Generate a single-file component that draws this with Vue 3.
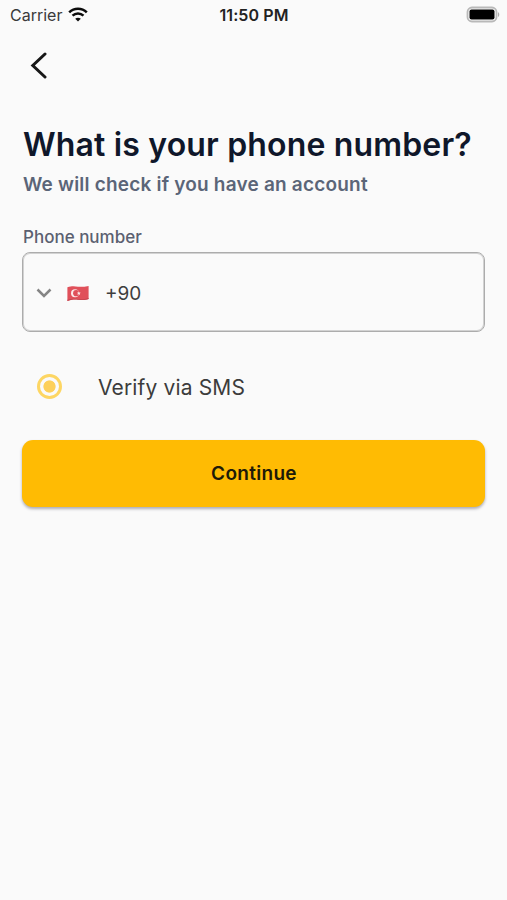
<script setup>
import { ref } from 'vue'

const dialCode = ref('+90')
const method = ref('sms')
</script>

<template>
  <main class="screen">
    <header class="status">
      <div class="carrier">
        <span>Carrier</span>
        <svg class="wifi" viewBox="0 0 20 15" width="20" height="15">
          <path d="M1.200 5.400C6.200.500 13.800.500 18.800 5.400" />
          <path d="M4.500 8.700C7.600 5.800 12.400 5.800 15.500 8.700" />
          <path class="dot" d="M10 14.500L7.200 11.700C8.800 10.300 11.200 10.300 12.800 11.700Z" />
        </svg>
      </div>
      <span class="time">11:50 PM</span>
      <svg class="battery" viewBox="0 0 34 18" width="34" height="18">
        <rect x="1.500" y="1.500" width="29" height="14" rx="4.500" fill="none" stroke="#b9b9b9" stroke-width="1.800" />
        <rect x="3.500" y="3.500" width="25" height="10" rx="2" fill="#000" />
        <path d="M32 6.300c1.700.6 1.700 4 0 4.600z" fill="#adadad" />
      </svg>
    </header>

    <nav class="nav">
      <button class="back" aria-label="Back">
        <svg viewBox="0 0 18 28" width="18" height="28">
          <path d="M15 3L2.800 14.500L15 26" />
        </svg>
      </button>
    </nav>

    <section class="content">
      <h1>What is your phone number?</h1>
      <p class="sub">We will check if you have an account</p>

      <label class="label">Phone number</label>
      <div class="field">
        <svg class="chevron" viewBox="0 0 16 10" width="16" height="10">
          <path d="M1.500 1.500L8 8L14.500 1.500" />
        </svg>
        <svg class="flag" viewBox="0 0 22 17" width="22" height="17">
          <path d="M.4 2.300C5 .8 8 1.400 11 1.700S17.500 1.800 21.600.9V14C17.500 15.400 14 15 11 14.700S5 14.500 .4 15.900Z" fill="#e0505a" />
          <path d="M.4 14.800C5 13.400 8 13.700 11 14S17.500 14.500 21.600 13V14C17.500 15.400 14 15 11 14.700S5 14.500 .4 15.900Z" fill="#c4434e" />
          <circle cx="8" cy="8.200" r="4" fill="#fbe9ea" />
          <circle cx="9.200" cy="8.200" r="3.100" fill="#e0505a" />
          <path d="M11.800 6.300l.6 1.300 1.400.1-1 .9.300 1.400-1.300-.7-1.200.7.300-1.400-1-.9 1.400-.1z" fill="#fbe9ea" />
        </svg>
        <span class="code">{{ dialCode }}</span>
      </div>

      <div class="option" role="radio" :aria-checked="method === 'sms'">
        <span class="radio"></span>
        <span class="option-text">Verify via SMS</span>
      </div>

      <button class="continue">Continue</button>
    </section>
  </main>
</template>

<style>
body {
  background: #fafafa;
}
</style>

<style scoped>
.screen {
  box-sizing: border-box;
  width: 507px;
  height: 900px;
  background: #fafafa;
  font-family: Inter, "Liberation Sans", sans-serif;
  overflow: hidden;
}
.status {
  display: grid;
  grid-template-columns: 1fr auto 1fr;
  align-items: center;
  height: 29px;
  padding: 0 9px 0 10px;
}
.carrier {
  display: flex;
  align-items: center;
  gap: 6px;
  font-size: 16px;
  color: #3a3a3a;
}
.wifi {
  fill: none;
  stroke: #0c0c0c;
  stroke-width: 2.500;
}
.wifi .dot {
  fill: #0c0c0c;
  stroke: none;
}
.time {
  font-size: 16px;
  font-weight: 600;
  letter-spacing: 0.1px;
  color: #222;
}
.battery {
  justify-self: end;
  margin-right: -2px;
}
button {
  border: 0;
  padding: 0;
  background: none;
  font: inherit;
}
.nav {
  display: flex;
  align-items: center;
  height: 72px;
  padding-left: 30px;
}
.back {
  display: flex;
}
.back path {
  fill: none;
  stroke: #171717;
  stroke-width: 3;
  stroke-linecap: round;
}
.content {
  display: flex;
  flex-direction: column;
  padding: 23px 22px 0 23px;
}
h1 {
  margin: 0;
  font-size: 32px;
  line-height: 42px;
  font-weight: 600;
  letter-spacing: 0.160px;
  color: #0f172a;
  white-space: nowrap;
}
.sub {
  margin: 6px 0 0;
  font-size: 19px;
  line-height: 26px;
  font-weight: 600;
  letter-spacing: 0.2px;
  color: #5b6578;
}
.label {
  margin-top: 28px;
  font-size: 17px;
  line-height: 22px;
  font-weight: 500;
  color: #5b6070;
}
.field {
  display: flex;
  align-items: center;
  box-sizing: border-box;
  height: 80px;
  margin-top: 4px;
  margin-left: -1px;
  padding: 2px 0 0 13px;
  border: 1px solid #acacac;
  border-radius: 8px;
  box-shadow: inset 0 0 0 1px #d2d2d2;
}
.chevron path {
  fill: none;
  stroke: #858585;
  stroke-width: 2.500;
}
.flag {
  margin-left: 15px;
}
.code {
  margin-left: 16px;
  font-size: 19px;
  color: #3e3e3e;
}
.option {
  display: flex;
  align-items: center;
  height: 28px;
  margin-top: 40px;
  padding-left: 14px;
}
.radio {
  box-sizing: border-box;
  width: 25px;
  height: 25px;
  border: 3px solid #fdd663;
  border-radius: 50%;
  background: radial-gradient(circle, #fdd05a 5.700px, transparent 6.500px);
}
.option-text {
  margin-left: 36px;
  padding-top: 4px;
  font-size: 21px;
  line-height: 28px;
  letter-spacing: 0.150px;
  color: #3c3c3c;
}
.continue {
  height: 67px;
  margin-top: 40px;
  margin-left: -1px;
  padding: 0 0 1px 1px;
  border-radius: 11px;
  background: #ffbb03;
  box-shadow: 0 2px 3px rgba(60, 60, 80, 0.4);
  font-size: 19px;
  font-weight: 600;
  letter-spacing: 0.300px;
  color: #201a08;
}
</style>
